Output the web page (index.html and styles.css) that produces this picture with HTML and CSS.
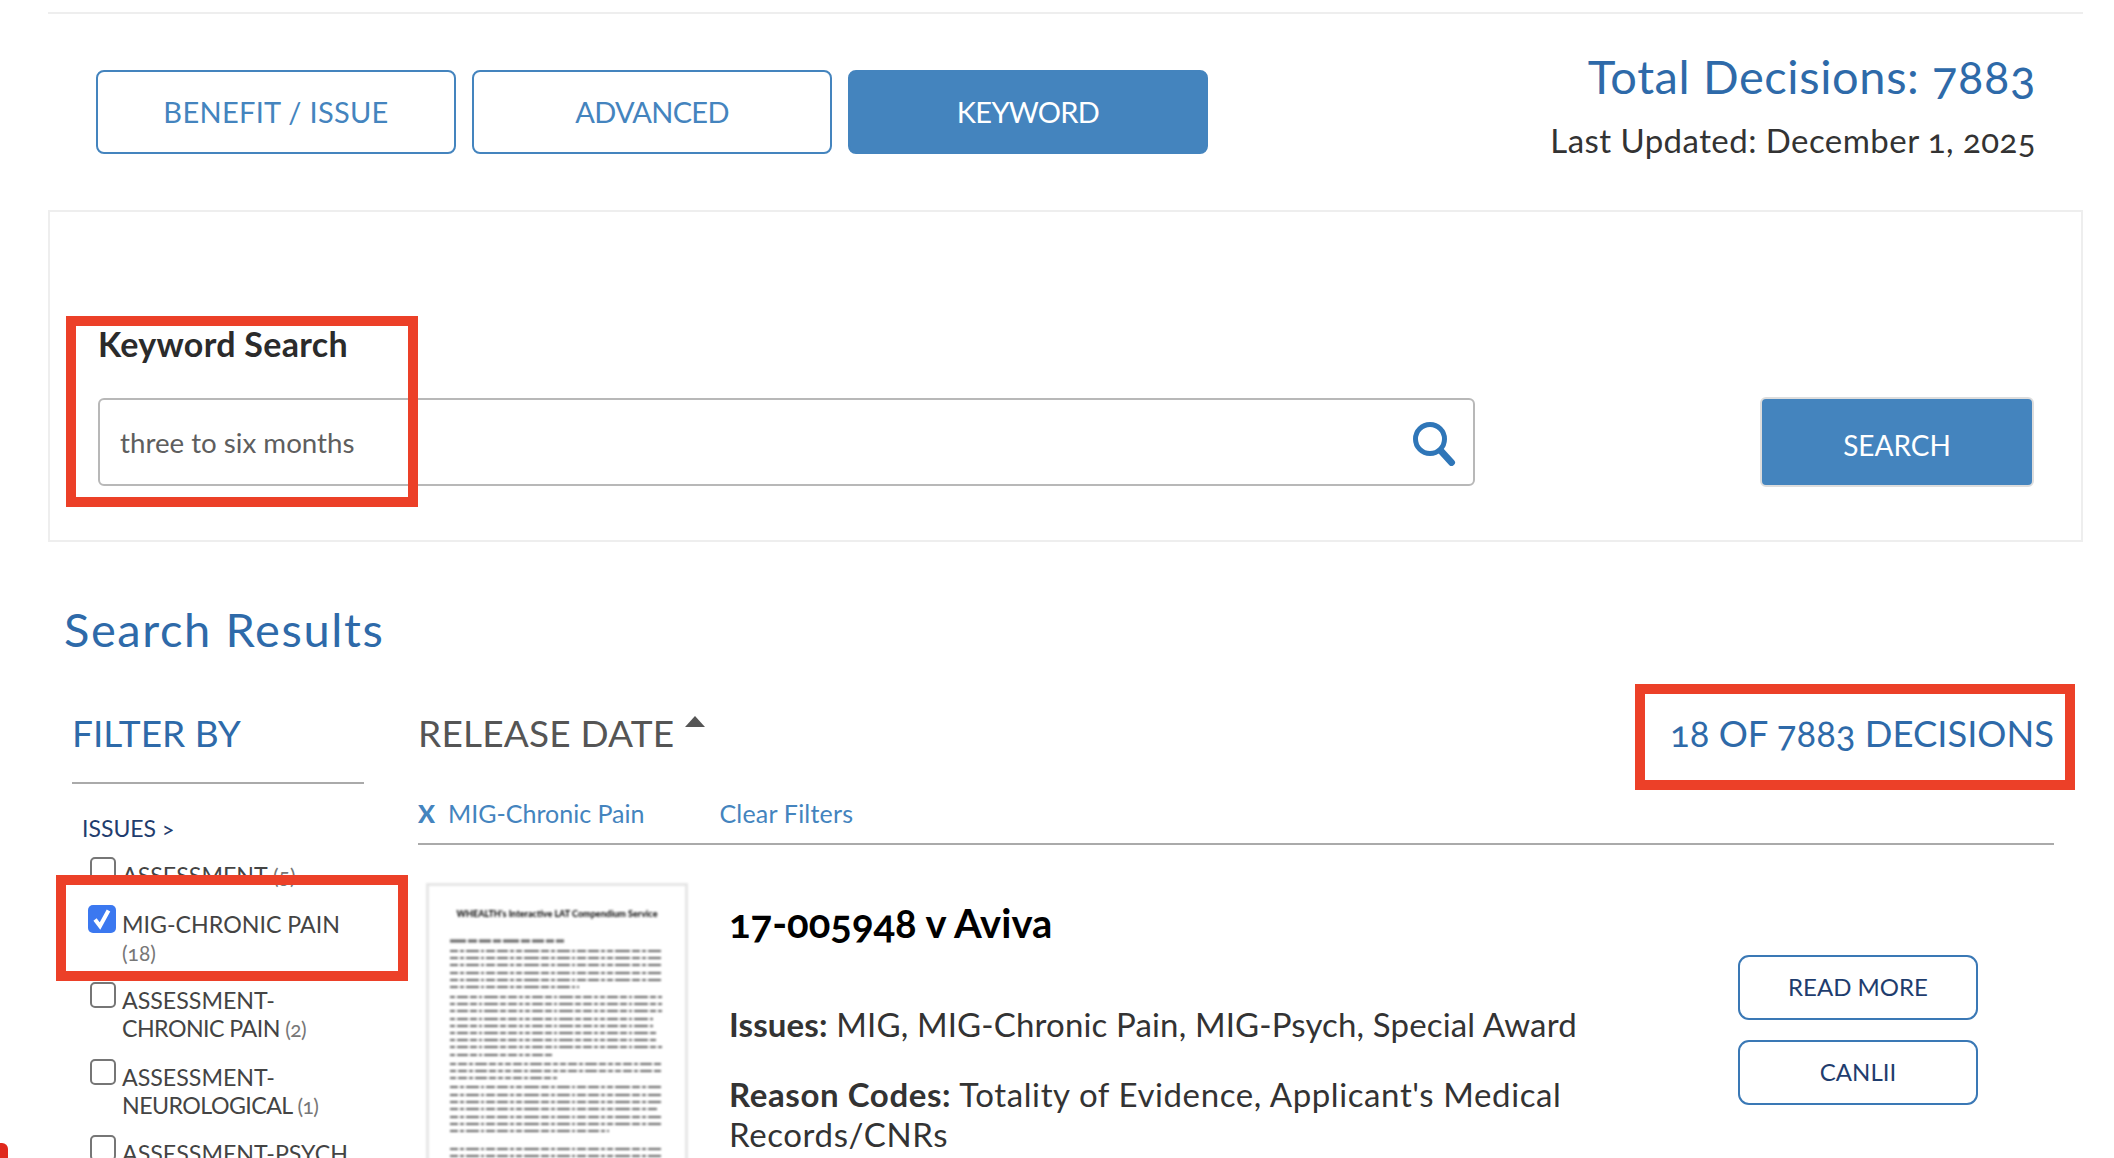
FILE: index.html
```html
<!DOCTYPE html>
<html lang="en">
<head>
<meta charset="utf-8">
<title>Decisions search</title>
<link rel="stylesheet" href="styles.css">
</head>
<body>
<div class="top-rule"></div>
<header class="head">
  <nav class="tabs">
    <a class="tab">BENEFIT / ISSUE</a>
    <a class="tab tab-tight">ADVANCED</a>
    <a class="tab tab-tight tab-on">KEYWORD</a>
  </nav>
  <div class="meta">
    <div class="total">Total Decisions: 7883</div>
    <div class="updated">Last Updated: December 1, 2025</div>
  </div>
</header>
<section class="panel">
  <div class="kw-label">Keyword Search</div>
  <div class="kw-row">
    <div class="kw-input">
      <span>three to six months</span>
      <svg class="kw-icon" width="44" height="46" viewBox="0 0 44 46"><circle cx="17" cy="19" r="14.5" fill="none" stroke="#2f76b8" stroke-width="5"/><path d="M28 31 38.5 42.5" fill="none" stroke="#2f76b8" stroke-width="7" stroke-linecap="round"/></svg>
    </div>
    <button class="kw-btn">SEARCH</button>
  </div>
</section>
<h2 class="results-title">Search Results</h2>
<div class="results">
  <aside class="side">
    <div class="side-head">FILTER BY</div>
    <div class="side-group">ISSUES &gt;</div>
    <div class="opt"><span class="box"></span><span class="opt-text">ASSESSMENT <i>(5)</i></span></div>
    <div class="opt"><span class="box box-on"><svg width="24" height="24" viewBox="0 0 24 24"><path d="M5 12.5 10 19 18.5 3.5" fill="none" stroke="#fff" stroke-width="4"/></svg></span><span class="opt-text">MIG-CHRONIC PAIN <i>(18)</i></span></div>
    <div class="opt"><span class="box"></span><span class="opt-text">ASSESSMENT-<br><span class="tight">CHRONIC PAIN <i>(2)</i></span></span></div>
    <div class="opt"><span class="box"></span><span class="opt-text">ASSESSMENT-<br><span class="tight">NEUROLOGICAL <i>(1)</i></span></span></div>
    <div class="opt"><span class="box"></span><span class="opt-text">ASSESSMENT-PSYCH</span></div>
  </aside>
  <main class="main">
    <div class="sort-row">
      <div class="sort">RELEASE DATE<svg class="caret" width="20" height="12" viewBox="0 0 20 12"><path d="M10 0 20 11H0Z" fill="#555"/></svg></div>
      <div class="count">18 OF 7883 DECISIONS</div>
    </div>
    <div class="filters">
      <span class="x">X</span><span class="chip">MIG-Chronic Pain</span><span class="clear">Clear Filters</span>
    </div>
    <article class="item">
      <div class="thumb">
        <div class="thumb-title">WHEALTH's Interactive LAT Compendium Service</div>
        <svg class="thumb-lines" width="256" height="270" viewBox="0 0 256 270">
          <g fill="none" stroke="#666" stroke-width="1.9">
            <path d="M21 38H135" stroke-width="2.8" stroke-dasharray="16 2 9 2 12 2 8 2"/>
            <path d="M21 48H233M21 55H233M21 62H233M21 70H233M21 77H233M21 84H150" stroke-dasharray="8 2 4 2 13 2 3 2 9 2 11 2 4 2 6 2 15 2"/>
            <path d="M21 94H233M21 101H233M21 108H233M21 116H224M21 123H224M21 130H228M21 137H228M21 144H233M21 152H125" stroke-dasharray="5 2 11 2 7 2 3 2 14 2 6 2 9 2 4 2"/>
            <path d="M21 161H233M21 168H233M21 175H128" stroke-dasharray="6 2 9 2 4 2 12 2 7 2 5 2"/>
            <path d="M21 184H233M21 192H233M21 199H233M21 206H228M21 214H233M21 221H233M21 228H180" stroke-dasharray="8 2 4 2 13 2 3 2 9 2 11 2 4 2 6 2 15 2"/>
            <path d="M21 246H233M21 253H233M21 261H233" stroke-dasharray="8 2 4 2 13 2 3 2 9 2 11 2 4 2 6 2 15 2"/>
          </g>
        </svg>
      </div>
      <div class="item-body">
        <h3 class="item-title">17-005948 v Aviva</h3>
        <p class="issues"><b>Issues:</b> MIG, MIG-Chronic Pain, MIG-Psych, Special Award</p>
        <p class="reasons"><b>Reason Codes:</b> Totality of Evidence, Applicant's Medical Records/CNRs</p>
      </div>
      <div class="item-actions">
        <a class="act">READ MORE</a>
        <a class="act">CANLII</a>
      </div>
    </article>
  </main>
</div>
<div class="mark mark-kw"></div>
<div class="mark mark-opt"></div>
<div class="mark mark-count"></div>
<div class="corner"></div>
</body>
</html>
```
FILE: styles.css
```css
* { box-sizing: border-box; }
html, body { margin: 0; height: 1158px; overflow: hidden; background: #fff; }
body { position: relative; font-family: Lato, "Open Sans", sans-serif; color: #333; font-variant-numeric: oldstyle-nums; padding-top: 12px; }
.top-rule { margin: 0 31px 0 48px; height: 2px; background: #eee; }
.head { margin: 0 31px 0 48px; height: 196px; padding: 56px 47px 0 48px; display: flex; justify-content: space-between; }
.tabs { display: flex; gap: 16px; align-items: flex-start; }
.tab { width: 360px; height: 84px; border: 2px solid #4484be; border-radius: 8px; color: #4484be; font-size: 29px; padding-bottom: 2px; display: flex; align-items: center; justify-content: center; letter-spacing: .3px; }
.tab-tight { letter-spacing: -.7px; }
.tab-on { background: #4484be; color: #fff; }
.meta { text-align: right; margin-top: -22px; }
.total { font-size: 47px; line-height: 56px; color: #2e6aa9; letter-spacing: .6px; }
.updated { font-size: 33px; line-height: 40px; margin-top: 16px; color: #333; letter-spacing: .45px; }
.panel { margin: 0 31px 0 48px; height: 332px; border: 2px solid #eee; padding: 112px 47px 0 48px; }
.kw-label { font-size: 34px; line-height: 40px; font-weight: 700; color: #2b2b2b; margin-bottom: 34px; letter-spacing: .3px; }
.kw-row { display: flex; justify-content: space-between; align-items: flex-start; }
.kw-input { width: 1377px; height: 88px; border: 2px solid #b8b8b8; border-radius: 6px; display: flex; align-items: center; justify-content: space-between; padding: 0 16px 0 20px; font-size: 27.7px; color: #5e5e5e; }
.kw-icon { margin-top: 1px; }
.kw-btn { width: 274px; height: 90px; margin-top: -1px; border: 2px solid #ddd; border-radius: 6px; background: #4484be; color: #fff; font: inherit; font-size: 28px; padding: 6px 0 0; }
.results-title { margin: 59px 0 0 64px; font-size: 47px; line-height: 56px; font-weight: 400; color: #2e6aa9; letter-spacing: 1.6px; }
.results { display: grid; grid-template-columns: 292px 1636px; column-gap: 54px; margin: 54px 0 0 72px; }
.side-head { font-size: 37px; line-height: 44px; color: #2e6aa9; padding-bottom: 27px; border-bottom: 2px solid #aaa; }
.side-group { margin-top: 31px; padding-left: 10px; font-size: 23px; line-height: 26px; color: #1f3d6e; }
.opt { display: flex; align-items: flex-start; margin-bottom: 19.5px; padding-left: 18px; font-size: 23.2px; line-height: 28px; color: #444; }
.side-group + .opt { margin-top: 20px; }
.box { flex: none; width: 26px; height: 26px; margin: -4px 6px 0 0; border: 2px solid #767676; border-radius: 5px; background: #fff; }
.box-on { width: 28px; height: 28px; margin: -5px 6px 0 -2px; border: 0; background: #3b78f0; display: flex; align-items: center; justify-content: center; }
.opt-text { flex: 1; }
.opt-text i { font-style: normal; color: #777; font-size: 21px; }
.tight { letter-spacing: -.55px; }
.sort-row { display: flex; justify-content: space-between; height: 44px; line-height: 44px; }
.sort { font-size: 37px; color: #555; letter-spacing: .2px; }
.caret { margin-left: 11px; vertical-align: 19px; }
.count { font-size: 36.4px; color: #2e6aa9; }
.filters { margin-top: 43px; height: 47px; line-height: 30px; padding-bottom: 15px; border-bottom: 2px solid #aaa; font-size: 25px; color: #4484be; display: flex; }
.x { font-weight: 900; margin-right: 13px; }
.clear { margin-left: 75px; letter-spacing: .2px; }
.item { display: flex; margin: 38px 0 0 8px; }
.thumb { flex: none; width: 262px; height: 300px; border: 3px solid #e6e6e6; filter: blur(1px); overflow: hidden; }
.thumb-title { text-align: center; font-size: 9px; line-height: 12px; font-weight: 900; color: #111; margin-top: 22px; white-space: nowrap; font-variant-numeric: normal; }
.thumb-lines { display: block; margin-top: -17px; }
.item-body { flex: none; width: 930px; margin-left: 41px; padding-top: 18px; }
.item-title { margin: 0 0 59px; font-size: 40px; line-height: 44px; font-weight: 700; color: #000; }
.issues, .reasons { margin: 0 0 30px; font-size: 33px; line-height: 40px; color: #333; letter-spacing: .15px; }
.reasons { letter-spacing: .6px; }
.item-actions { width: 240px; margin-left: 79px; padding-top: 72px; display: flex; flex-direction: column; gap: 20px; }
.act { height: 65px; border: 2px solid #3a78b5; border-radius: 11px; color: #1f3d6e; font-size: 24px; padding-bottom: 2px; display: flex; align-items: center; justify-content: center; }
.mark { position: absolute; border: 10px solid #ec4028; }
.mark-kw { left: 66px; top: 316px; width: 352px; height: 191px; }
.mark-opt { left: 56px; top: 875px; width: 352px; height: 106px; }
.mark-count { left: 1635px; top: 684px; width: 440px; height: 106px; }
.corner { position: absolute; left: 0; top: 1143px; width: 8px; height: 15px; background: #e0281c; border-top-right-radius: 6px; }
```
